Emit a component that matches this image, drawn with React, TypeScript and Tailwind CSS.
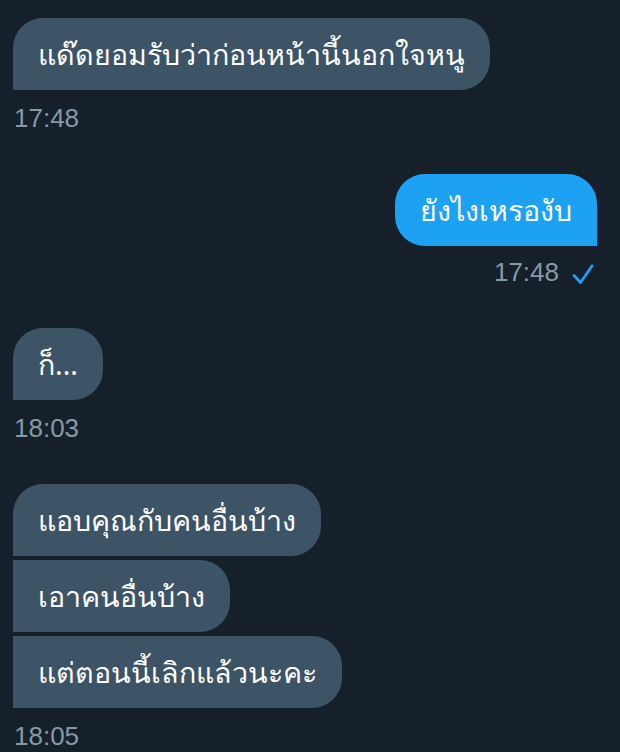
const font = { fontFamily: '"Noto Sans", "Liberation Sans", sans-serif' };

type Msg = { text: string; shape: string };

const Bubble = ({ text, shape, mine }: { text: string; shape: string; mine?: boolean }) => (
  <div
    className={`h-[72px] px-[25px] flex items-center text-[28.6px] text-white whitespace-nowrap ${shape} ${
      mine ? "bg-[#1da1f2]" : "bg-[#3d5466]"
    }`}
  >
    {text}
  </div>
);

const Time = ({ time, mine }: { time: string; mine?: boolean }) => (
  <div
    className={`h-8 flex items-center gap-3 text-[26px] text-[#8899a6] ${
      mine ? "mt-[10px] justify-end pr-[25px]" : "mt-3 pl-px"
    }`}
    style={{ fontFamily: '"Liberation Sans", sans-serif' }}
  >
    <span>{time}</span>
    {mine && (
      <svg width="24" height="24" viewBox="0 0 24 24" fill="none" className="mt-1">
        <path d="M3 13.5l6.5 7L21 4" stroke="#1da1f2" strokeWidth="2.8" strokeLinecap="round" strokeLinejoin="round" />
      </svg>
    )}
  </div>
);

const Group = ({ msgs, time }: { msgs: Msg[]; time: string }) => (
  <div className="flex flex-col items-start pl-[13px]">
    <div className="flex flex-col items-start gap-1">
      {msgs.map((m, i) => (
        <Bubble key={i} text={m.text} shape={m.shape} />
      ))}
    </div>
    <div className="self-stretch">
      <Time time={time} />
    </div>
  </div>
);

export default function App() {
  return (
    <div className="w-[620px] h-[752px] bg-[#15202b] overflow-hidden pt-[18px] flex flex-col gap-10" style={font}>
      <Group time="17:48" msgs={[{ text: "แด๊ดยอมรับว่าก่อนหน้านี้นอกใจหนู", shape: "rounded-[30px] rounded-bl-none" }]} />
      <div>
        <div className="flex flex-col items-end pr-[23px]">
          <Bubble mine text="ยังไงเหรองับ" shape="rounded-[30px] rounded-br-none" />
        </div>
        <Time mine time="17:48" />
      </div>
      <Group time="18:03" msgs={[{ text: "ก็...", shape: "rounded-[30px] rounded-bl-none" }]} />
      <Group
        time="18:05"
        msgs={[
          { text: "แอบคุณกับคนอื่นบ้าง", shape: "rounded-[30px] rounded-bl-none" },
          { text: "เอาคนอื่นบ้าง", shape: "rounded-r-[30px]" },
          { text: "แต่ตอนนี้เลิกแล้วนะคะ", shape: "rounded-r-[30px]" },
        ]}
      />
    </div>
  );
}
